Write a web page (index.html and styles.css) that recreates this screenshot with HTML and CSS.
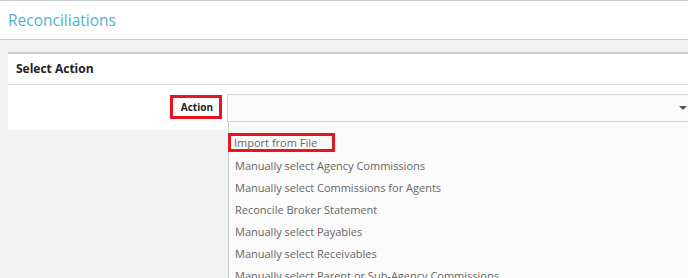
FILE: index.html
```html
<!DOCTYPE html>
<html lang="en">
<head>
    <meta charset="UTF-8">
    <meta name="viewport" content="width=device-width, initial-scale=1.0">
    <title>Reconciliations</title>
    <link rel="stylesheet" href="styles.css">
</head>
<body>
    <div class="page-header">
        <h1 class="page-title">Reconciliations</h1>
    </div>

    <div class="main-content">
        <div class="panel">
            <div class="panel-header">Select Action</div>
            <div class="panel-body">
                <div class="form-row">
                    <label class="form-label" for="action"><span class="highlight">Action</span></label>
                    <div class="select-wrap">
                        <div class="select-box" id="action">
                            <span class="select-arrow"></span>
                        </div>
                        <!-- Open dropdown -->
                        <ul class="dropdown">
                            <li class="selected"><span class="highlight-item">Import from File</span></li>
                            <li>Manually select Agency Commissions</li>
                            <li>Manually select Commissions for Agents</li>
                            <li>Reconcile Broker Statement</li>
                            <li>Manually select Payables</li>
                            <li>Manually select Receivables</li>
                            <li>Manually select Parent or Sub-Agency Commissions</li>
                        </ul>
                    </div>
                </div>
            </div>
        </div>
    </div>
</body>
</html>
```

FILE: styles.css
```css
body {
    font-family: 'Open Sans', sans-serif;
    margin: 0;
    padding: 0;
    min-height: 100vh;
    overflow: hidden;
    background-color: #f1f1f1;
    color: #333;
}

.page-header {
    background: #fff;
    border-top: 1px solid #c4ccd2;
    border-bottom: 1px solid #c4ccd2;
    height: 38px;
    padding: 0 8px;
}

.page-title {
    margin: 0;
    font-size: 15.5px;
    font-weight: normal;
    line-height: 38px;
    color: #4eb1cc;
}

.main-content {
    padding: 12px 0 0 8px;
}

.panel {
    background: #fff;
    border-top: 2px solid #c9d0d5;
    margin-right: -20px;
}

.panel-header {
    height: 30px;
    line-height: 30px;
    padding: 0 8px;
    font-size: 12px;
    font-weight: bold;
    color: #222;
    border-bottom: 1px solid #dde1e4;
}

.panel-body {
    height: 45px;
    padding-top: 9px;
    box-sizing: border-box;
}

.form-row {
    display: flex;
    align-items: flex-start;
}

.form-label {
    width: 219px;
    text-align: right;
    padding-right: 5px;
    box-sizing: border-box;
}

.highlight {
    display: inline-block;
    border: 3px solid #e8141f;
    padding: 0 6px 0 8px;
    height: 18px;
    line-height: 18px;
    font-size: 10px;
    font-weight: bold;
    color: #222;
}

.select-wrap {
    flex: 1;
    position: relative;
}

.select-box {
    height: 26px;
    border: 1px solid #d3d6d8;
    background: #fafafa;
    position: relative;
}

.select-arrow {
    position: absolute;
    right: 20px;
    top: 11px;
    border-left: 4px solid transparent;
    border-right: 4px solid transparent;
    border-top: 4px solid #555;
}

.dropdown {
    position: absolute;
    top: 28px;
    left: 1px;
    right: 0;
    margin: 0;
    padding: 0;
    list-style: none;
    background: #fafafa;
    border-left: 1px solid #c9ced2;
    font-size: 11px;
    color: #666;
}

.dropdown li {
    height: 22px;
    line-height: 22px;
    padding-left: 6px;
}

.dropdown li.selected {
    height: 19px;
    margin: 11px 0 3px;
    padding-left: 0;
}

.highlight-item {
    display: inline-block;
    border: 3px solid #e8141f;
    height: 13px;
    line-height: 13px;
    padding: 0 15px 0 3px;
    margin-left: -1px;
    vertical-align: top;
}
```
